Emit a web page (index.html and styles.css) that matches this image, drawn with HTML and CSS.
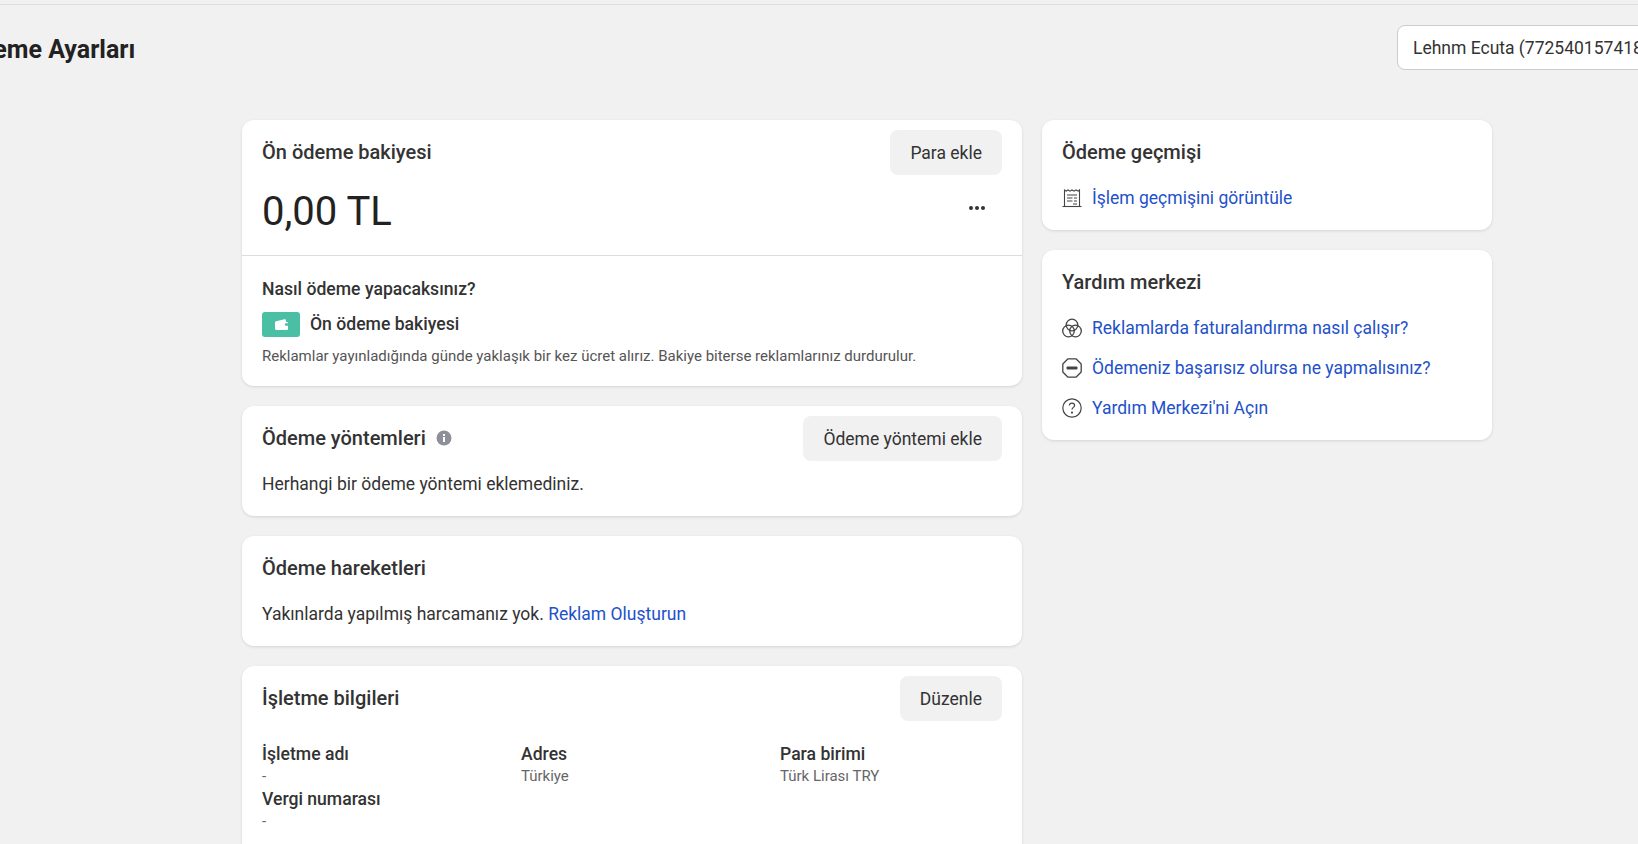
FILE: index.html
```html
<!DOCTYPE html>
<html lang="tr">
<head>
	<meta charset="UTF-8">
	<title>Ödeme Ayarları</title>
	<link rel="stylesheet" href="styles.css">
</head>
<body>
	<div class="rule"></div>
	<div class="top">
		<h1 class="page-title">Ödeme Ayarları</h1>
		<div class="account">Lehnm Ecuta (772540157418)</div>
	</div>
	<div class="columns">
		<div class="col-main">
			<div class="card">
				<div class="card-head">
					<h2 class="card-title">Ön ödeme bakiyesi</h2>
					<button class="btn">Para ekle</button>
				</div>
				<div class="amount-row">
					<div class="amount">0,00 TL</div>
					<div class="dots"><span></span><span></span><span></span></div>
				</div>
				<div class="how">
					<div class="how-title">Nasıl ödeme yapacaksınız?</div>
					<div class="how-method">
						<span class="wallet">
							<svg width="13" height="11" viewBox="0 0 13 11"><path d="M0 3.5Q0 2.6 1 2.3L9.5.2Q11 0 11 1.5V3H12Q13 3 13 4V4.3H11A1.2 1.2 0 0 0 11 6.7H13V10Q13 11 12 11H1.5Q0 11 0 9.5Z" fill="#fff"/></svg>
						</span>
						<span class="how-name">Ön ödeme bakiyesi</span>
					</div>
					<p class="note">Reklamlar yayınladığında günde yaklaşık bir kez ücret alırız. Bakiye biterse reklamlarınız durdurulur.</p>
				</div>
			</div>

			<div class="card">
				<div class="card-head">
					<h2 class="card-title">Ödeme yöntemleri
						<svg class="info" width="16" height="16" viewBox="0 0 16 16"><circle cx="8" cy="8" r="7.5" fill="#8d9099"/><rect x="7" y="7" width="2" height="5" fill="#fff"/><rect x="7" y="4" width="2" height="2" fill="#fff"/></svg>
					</h2>
					<button class="btn">Ödeme yöntemi ekle</button>
				</div>
				<p class="card-text">Herhangi bir ödeme yöntemi eklemediniz.</p>
			</div>

			<div class="card">
				<div class="card-head">
					<h2 class="card-title">Ödeme hareketleri</h2>
				</div>
				<p class="card-text">Yakınlarda yapılmış harcamanız yok. <a class="link" href="#">Reklam Oluşturun</a></p>
			</div>

			<div class="card">
				<div class="card-head">
					<h2 class="card-title">İşletme bilgileri</h2>
					<button class="btn">Düzenle</button>
				</div>
				<div class="fields">
					<div class="field">
						<div class="field-label">İşletme adı</div>
						<div class="field-value">-</div>
						<div class="field-label">Vergi numarası</div>
						<div class="field-value">-</div>
					</div>
					<div class="field">
						<div class="field-label">Adres</div>
						<div class="field-value">Türkiye</div>
					</div>
					<div class="field">
						<div class="field-label">Para birimi</div>
						<div class="field-value">Türk Lirası TRY</div>
					</div>
				</div>
			</div>
		</div>

		<div class="col-side">
			<div class="card card-side">
				<h2 class="card-title side-title">Ödeme geçmişi</h2>
				<a class="side-link" href="#">
					<svg width="20" height="20" viewBox="0 0 20 20" fill="none" stroke="#444" stroke-width="1.1"><path d="M2.5 18V2l1.75 1.2L6 2l2 1.2L10 2l2 1.2L14 2l2 1.2L17.5 2V18"/><path d="M.5 18.5h19"/><path d="M5 7h10M5 10h5.5M12 10h3M5 13h5.5M12 13h3M11 16h4"/></svg>
					İşlem geçmişini görüntüle
				</a>
			</div>
			<div class="card card-side">
				<h2 class="card-title side-title">Yardım merkezi</h2>
				<a class="side-link" href="#">
					<svg width="20" height="20" viewBox="0 0 20 20" fill="none" stroke="#444" stroke-width="1.3"><circle cx="10" cy="7" r="5.8"/><circle cx="6.5" cy="13" r="5.8"/><circle cx="13.5" cy="13" r="5.8"/></svg>
					Reklamlarda faturalandırma nasıl çalışır?
				</a>
				<a class="side-link" href="#">
					<svg width="20" height="20" viewBox="0 0 20 20"><path d="M6 .8h8L19.2 6v8L14 19.2H6L.8 14V6z" fill="none" stroke="#444" stroke-width="1.3" stroke-linejoin="round"/><rect x="4.5" y="8.6" width="11" height="2.8" rx="1" fill="#444"/></svg>
					Ödemeniz başarısız olursa ne yapmalısınız?
				</a>
				<a class="side-link" href="#">
					<svg width="20" height="20" viewBox="0 0 20 20" fill="none" stroke="#444" stroke-width="1.2"><circle cx="10" cy="10" r="9.2"/><path d="M7.4 7.6c0-1.5 1.1-2.5 2.6-2.5s2.6 1 2.6 2.3c0 2-2.6 2-2.6 4.2"/><circle cx="10" cy="14.6" r=".5" fill="#444"/></svg>
					Yardım Merkezi'ni Açın
				</a>
			</div>
		</div>
	</div>
</body>
</html>
```

FILE: styles.css
```css
body,h1,h2,p{margin:0;padding:0;}
body{
	height: 844px;
	overflow: hidden;
	background: #f1f1f1;
	font-family: Roboto, "Noto Sans", sans-serif;
	color: #333;
}
.rule{
	height: 5px;
	border-bottom: 1px solid #ddd;
	box-sizing: border-box;
}

.top{
	display: flex;
	justify-content: space-between;
	align-items: center;
	height: 45px;
	margin-top: 20px;
}
.page-title{
	margin: 3px 0 0 -38px;
	font-size: 25px;
	font-weight: 700;
	color: #222;
	white-space: nowrap;
}
.account{
	box-sizing: border-box;
	flex: none;
	width: 300px;
	height: 45px;
	margin-right: -59px;
	padding: 0 15px;
	line-height: 44px;
	font-size: 17.5px;
	white-space: nowrap;
	overflow: hidden;
	background: #fff;
	border: 1px solid #ccc;
	border-radius: 8px;
}

.columns{
	display: flex;
	align-items: flex-start;
	gap: 20px;
	margin: 50px 0 0 242px;
}
.col-main{
	flex: none;
	width: 780px;
	display: flex;
	flex-direction: column;
	gap: 20px;
}
.col-side{
	flex: none;
	width: 450px;
	display: flex;
	flex-direction: column;
	gap: 20px;
}

.card{
	background: #fff;
	border-radius: 12px;
	box-shadow: 0 1px 3px rgba(0,0,0,.12);
}
.card-head{
	display: flex;
	justify-content: space-between;
	align-items: center;
	height: 45px;
	padding: 10px 20px 0;
}
.card-head .card-title{
	margin-bottom: 2px;
}
.card-title{
	display: flex;
	align-items: center;
	gap: 10px;
	font-size: 20px;
	font-weight: 500;
	color: #333;
}
.info{
	margin-top: 1px;
}
.btn{
	height: 45px;
	padding: 0 20px;
	border: 0;
	border-radius: 8px;
	background: #f1f1f1;
	font-family: inherit;
	font-size: 17.5px;
	color: #333;
}

.amount-row{
	display: flex;
	justify-content: space-between;
	align-items: center;
	height: 72px;
	padding: 0 37px 8px 20px;
	border-bottom: 1px solid #ddd;
}
.amount{
	font-size: 40px;
	color: #222;
}
.dots{
	display: flex;
	gap: 2px;
	margin-bottom: 6px;
}
.dots span{
	width: 4px;
	height: 4px;
	border-radius: 2px;
	background: #333;
}

.how{
	padding: 22px 20px 21px;
}
.how-title{
	font-size: 17.6px;
	font-weight: 500;
	line-height: 22px;
}
.how-method{
	display: flex;
	align-items: center;
	gap: 10px;
	margin-top: 12px;
}
.wallet{
	display: flex;
	align-items: center;
	justify-content: center;
	width: 38px;
	height: 25px;
	border-radius: 3px;
	background: #4bbfa4;
}
.how-name{
	margin-bottom: 1px;
	font-size: 17.6px;
	font-weight: 500;
}
.note{
	margin-top: 10px;
	font-size: 15px;
	line-height: 18px;
	color: #555;
}

.card-text{
	padding: 12px 20px 21px;
	font-size: 17.5px;
	line-height: 22px;
}
.link{
	color: #2351c9;
	text-decoration: none;
}

.fields{
	display: grid;
	grid-template-columns: 259px 259px 1fr;
	padding: 22px 20px 60px;
}
.field-label{
	font-size: 17.6px;
	font-weight: 500;
	line-height: 22px;
}
.field-value{
	margin-bottom: 1px;
	font-size: 15px;
	line-height: 22px;
	color: #666;
}

.card-side{
	padding: 20px 20px 12px;
}
.side-title{
	line-height: 24px;
	margin-bottom: 14px;
}
.side-link{
	display: flex;
	align-items: center;
	gap: 10px;
	height: 40px;
	font-size: 17.5px;
	color: #2351c9;
	text-decoration: none;
}
```
